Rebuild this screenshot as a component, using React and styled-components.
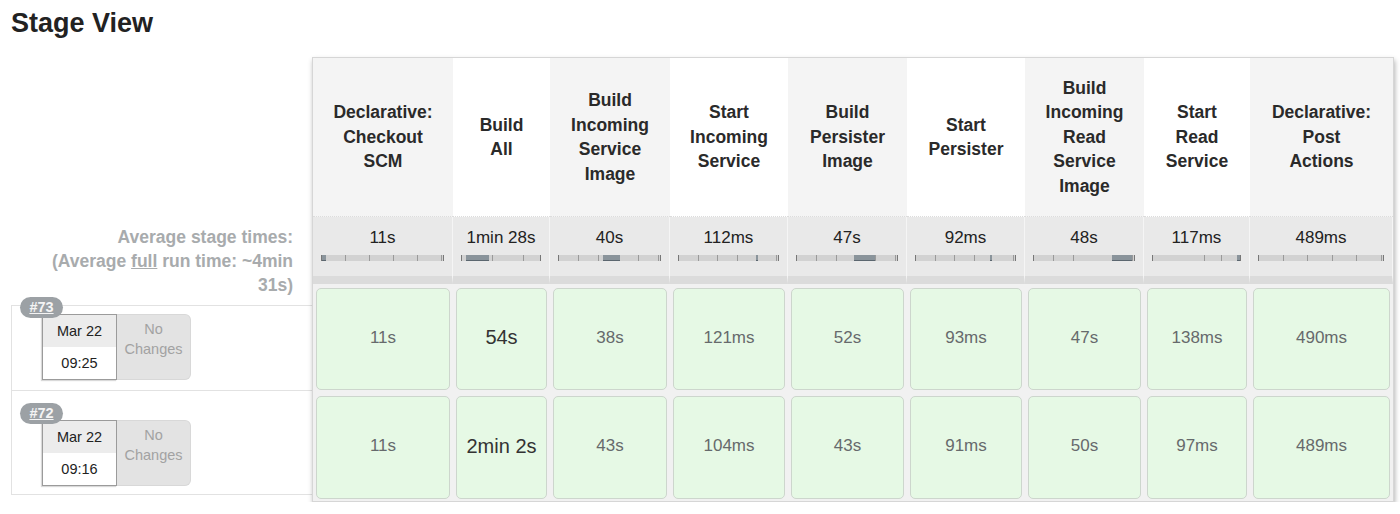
import styled, { createGlobalStyle } from "styled-components";

const GlobalStyle = createGlobalStyle`
  body {
    margin: 0;
    background: #fff;
    font-family: "Liberation Sans", Arial, sans-serif;
  }
`;

const stages = [
  { lines: ["Declarative:", "Checkout", "SCM"], width: 140, avg: "11s", bar: [0, 3], runs: ["11s", "11s"] },
  { lines: ["Build", "All"], width: 97, avg: "1min 28s", bar: [5, 35], runs: ["54s", "2min 2s"], long: true },
  { lines: ["Build", "Incoming", "Service", "Image"], width: 120, avg: "40s", bar: [44, 60], runs: ["38s", "43s"] },
  { lines: ["Start", "Incoming", "Service"], width: 118, avg: "112ms", bar: [78, 80], runs: ["121ms", "104ms"] },
  { lines: ["Build", "Persister", "Image"], width: 119, avg: "47s", bar: [57, 78], runs: ["52s", "43s"] },
  { lines: ["Start", "Persister"], width: 118, avg: "92ms", bar: [75, 77], runs: ["93ms", "91ms"] },
  { lines: ["Build", "Incoming", "Read", "Service", "Image"], width: 119, avg: "48s", bar: [78, 98], runs: ["47s", "50s"] },
  { lines: ["Start", "Read", "Service"], width: 106, avg: "117ms", bar: [97, 100], runs: ["138ms", "97ms"] },
  { lines: ["Declarative:", "Post", "Actions"], width: 143, avg: "489ms", bar: [0, 0], runs: ["490ms", "489ms"] },
];

const builds = [
  { id: "#73", date: "Mar 22", time: "09:25", height: 85, pad: 8 },
  { id: "#72", date: "Mar 22", time: "09:16", height: 105, pad: 29, last: true },
];

const Page = styled.div`
  padding: 8px 0 0 11px;
`;

const Title = styled.h2`
  margin: 0;
  font-size: 27px;
  font-weight: 700;
  line-height: 31px;
  color: #222;
`;

const StageWrap = styled.div`
  display: flex;
  margin-top: 18px;
`;

const LeftCol = styled.div`
  width: 301px;
  display: flex;
  flex-direction: column;
`;

const Spacer = styled.div`
  height: 160px;
`;

const AvgLabel = styled.div`
  height: 88px;
  box-sizing: border-box;
  padding: 8px 19px 0 0;
  text-align: right;
  font-size: 17.5px;
  font-weight: 700;
  line-height: 24px;
  color: #a8abad;

  u {
    text-decoration-thickness: 1px;
  }
`;

const BuildRow = styled.div`
  height: ${(p) => p.$height}px;
  box-sizing: border-box;
  padding: ${(p) => p.$pad}px 0 0 30px;
  border-top: 1px solid #e2e2e2;
  border-left: 1px solid #e2e2e2;
  border-bottom: ${(p) => (p.$last ? "1px solid #e2e2e2" : "none")};
`;

const BuildCard = styled.div`
  position: relative;
  display: flex;
  width: 149px;
  height: 66px;
`;

const Badge = styled.div`
  position: absolute;
  left: -22px;
  top: -17px;
  width: 43px;
  height: 21px;
  border-radius: 11px;
  background: #9ca1a5;
  color: #f4f4f4;
  font-size: 14.5px;
  font-weight: 700;
  line-height: 21px;
  text-align: center;
  text-decoration: underline;
  z-index: 2;
`;

const DateBox = styled.div`
  width: 75px;
  box-sizing: border-box;
  border: 1px solid #9b9b9b;
  box-shadow: -1px 1px 1px rgba(0, 0, 0, 0.15);
  background: #fff;
  display: flex;
  flex-direction: column;
  font-size: 14.5px;
  color: #222;
  z-index: 1;
`;

const DatePart = styled.div`
  flex: 1;
  display: flex;
  align-items: center;
  justify-content: center;
  background: ${(p) => (p.$top ? "#ececec" : "#fff")};
`;

const ChangesBox = styled.div`
  width: 74px;
  box-sizing: border-box;
  padding-top: 4px;
  border: 1px solid #d8d8d8;
  border-left: none;
  border-radius: 0 6px 6px 0;
  background: #e3e3e3;
  color: #a2a2a2;
  font-size: 14.5px;
  line-height: 20px;
  text-align: center;
`;

const Table = styled.div`
  display: grid;
  grid-template-columns: ${(p) => p.$cols};
  grid-template-rows: 159px 67px 108px 109px;
  border: 1px solid #d6d6d6;
  box-shadow: 1px 3px 5px rgba(0, 0, 0, 0.3);
  background: #f1f1f1;
`;

const HeadCell = styled.div`
  display: flex;
  align-items: center;
  justify-content: center;
  text-align: center;
  background: ${(p) => (p.$alt ? "#f4f4f4" : "#fff")};
  border-bottom: 1px dotted #dcdcdc;
  font-size: 17.5px;
  font-weight: 700;
  line-height: 24.5px;
  color: #2a2a2a;
`;

const AvgCell = styled.div`
  box-sizing: border-box;
  padding-top: 11px;
  background: #e9e9e9;
  border-right: 1px solid #f5f5f5;
  border-bottom: 8px solid #dbdbdb;
  text-align: center;
  font-size: 17px;
  line-height: 20px;
  color: #222;
`;

const Bar = styled.div`
  display: flex;
  height: 6px;
  margin: 7px 8px 0;
  box-sizing: border-box;
  border-left: 1px solid #777;
  border-right: 1px solid #777;
  background: repeating-linear-gradient(
      90deg,
      transparent 0 19%,
      #9a9a9a 19% 19.8%
    ),
    #d2d2d2;
`;

const BarFill = styled.div`
  height: 100%;
  background: #8a949b;
  border-bottom: 1px solid #5b666f;
  box-sizing: border-box;
`;

const RunWrap = styled.div`
  padding: 4px 3px 2px;
  box-sizing: border-box;
  display: flex;
`;

const RunCell = styled.div`
  flex: 1;
  display: flex;
  align-items: center;
  justify-content: center;
  padding-bottom: 3px;
  border: 1px solid #cdd6cd;
  border-radius: 5px;
  background: #e6f9e5;
  font-size: ${(p) => (p.$long ? "20px" : "17px")};
  color: ${(p) => (p.$long ? "#333" : "#666a6c")};
`;

function Lines({ lines }) {
  return lines.map((l, i) => (
    <span key={i}>
      {l}
      {i < lines.length - 1 && <br />}
    </span>
  ));
}

export default function App() {
  const cols = stages.map((s) => `${s.width}px`).join(" ");

  return (
    <Page>
      <GlobalStyle />
      <Title>Stage View</Title>
      <StageWrap>
        <LeftCol>
          <Spacer />
          <AvgLabel>
            Average stage times:
            <br />
            (Average <u>full</u> run time: ~4min
            <br />
            31s)
          </AvgLabel>
          {builds.map((b) => (
            <BuildRow key={b.id} $height={b.height} $pad={b.pad} $last={b.last}>
              <BuildCard>
                <Badge>{b.id}</Badge>
                <DateBox>
                  <DatePart $top>{b.date}</DatePart>
                  <DatePart>{b.time}</DatePart>
                </DateBox>
                <ChangesBox>
                  No
                  <br />
                  Changes
                </ChangesBox>
              </BuildCard>
            </BuildRow>
          ))}
        </LeftCol>

        <Table $cols={cols}>
          {stages.map((s, i) => (
            <HeadCell key={"h" + i} $alt={i % 2 === 0}>
              <div>
                <Lines lines={s.lines} />
              </div>
            </HeadCell>
          ))}
          {stages.map((s, i) => (
            <AvgCell key={"a" + i}>
              {s.avg}
              <Bar>
                {s.bar[1] > 0 && (
                  <BarFill
                    style={{
                      marginLeft: `${s.bar[0]}%`,
                      width: `${s.bar[1] - s.bar[0]}%`,
                    }}
                  />
                )}
              </Bar>
            </AvgCell>
          ))}
          {[0, 1].map((r) =>
            stages.map((s, i) => (
              <RunWrap key={`r${r}-${i}`}>
                <RunCell $long={s.long}>{s.runs[r]}</RunCell>
              </RunWrap>
            ))
          )}
        </Table>
      </StageWrap>
    </Page>
  );
}
